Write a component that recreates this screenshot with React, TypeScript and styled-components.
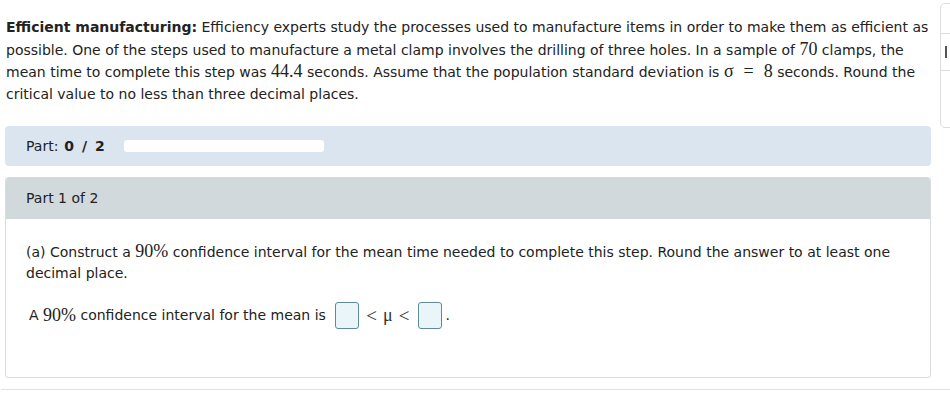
import React from "react";
import styled, { createGlobalStyle } from "styled-components";

const GlobalStyle = createGlobalStyle`
  html, body {
    margin: 0;
    padding: 0;
    background: #ffffff;
  }
  body {
    font-family: "DejaVu Sans", Verdana, sans-serif;
    color: #222222;
    overflow: hidden;
  }
`;

const Page = styled.div`
  position: relative;
  width: 950px;
  height: 406px;
  overflow: hidden;
`;

const Main = styled.div`
  width: 926px;
  padding: 17px 0 0 5px;
  display: flex;
  flex-direction: column;
`;

const Problem = styled.p`
  margin: 0 0 0 1px;
  font-size: 14px;
  line-height: 21.5px;
  color: #222;
`;

const Bold = styled.b`
  font-weight: bold;
`;

const M = styled.span`
  font-family: "Liberation Serif", "Times New Roman", serif;
  font-size: 18px;
`;

const Eq = styled.span`
  font-family: "Liberation Serif", "Times New Roman", serif;
  font-size: 18px;
  margin: 0 10px;
`;

const PartBar = styled.div`
  margin-top: 21px;
  height: 40px;
  background: #dae5ef;
  border-radius: 4px;
  display: flex;
  align-items: center;
  padding-left: 21px;
  font-size: 14px;
  color: #222;
`;

const PartCount = styled.b`
  margin-left: 6px;
  font-weight: bold;
  width: 60px;
  white-space: pre;
  word-spacing: 3px;
`;

const Progress = styled.div`
  width: 200px;
  height: 12px;
  background: #ffffff;
  border-radius: 3px;
`;

const Card = styled.div`
  margin-top: 11px;
  height: 200px;
  border: 1px solid #dcdcdc;
  border-top: none;
  border-radius: 4px;
  display: flex;
  flex-direction: column;
  overflow: hidden;
`;

const CardHeader = styled.div`
  height: 42px;
  background: #d1d9dc;
  display: flex;
  align-items: center;
  padding-left: 20px;
  font-size: 14px;
  color: #222;
`;

const CardBody = styled.div`
  padding: 22px 20px 0 20px;
  font-size: 14px;
  line-height: 21px;
`;

const Question = styled.p`
  margin: 0;
`;

const AnswerRow = styled.div`
  margin-top: 18px;
  padding-left: 3px;
  display: flex;
  align-items: center;
`;

const AnswerBox = styled.div`
  width: 22px;
  height: 25px;
  border: 1px solid #5d8c98;
  border-radius: 3px;
  background: #e9f5f8;
  margin: 0 3px 0 5px;
`;

const Rel = styled.span`
  font-family: "Liberation Serif", "Times New Roman", serif;
  font-size: 19px;
  color: #333;
  margin: 0 4px;
`;

const Mu = styled.span`
  font-family: "Liberation Serif", "Times New Roman", serif;
  font-size: 18px;
  color: #333;
  margin: 0 2px;
`;

const Divider = styled.div`
  margin-top: 11px;
  margin-left: 1px;
  width: 949px;
  border-top: 1px solid #e2e2e2;
`;

const SidePanel = styled.div`
  position: absolute;
  top: 3px;
  left: 940px;
  width: 40px;
  height: 123px;
  border: 1px solid #dddddd;
  border-radius: 5px;
  display: flex;
  flex-direction: column;
`;

const SideRow = styled.div<{ h: number }>`
  height: ${(p) => p.h}px;
  border-bottom: 1px solid #dddddd;
  display: flex;
  align-items: center;
  padding-left: 4px;
`;

const SideMark = styled.div`
  width: 2px;
  height: 12px;
  background: #555;
`;

export default function App() {
  return (
    <Page>
      <GlobalStyle />
      <Main>
        <Problem>
          <Bold>Efficient manufacturing:</Bold> Efficiency experts study the processes used to
          manufacture items in order to make them as efficient as possible. One of the steps used to
          manufacture a metal clamp involves the drilling of three holes. In a sample of <M>70</M>{" "}
          clamps, the mean time to complete this step was <M>44.4</M> seconds. Assume that the
          population standard deviation is <M>σ</M>
          <Eq>=</Eq>
          <M>8</M> seconds. Round the critical value to no less than three decimal places.
        </Problem>
        <PartBar>
          Part:<PartCount>{"0 / 2"}</PartCount>
          <Progress />
        </PartBar>
        <Card>
          <CardHeader>Part 1 of 2</CardHeader>
          <CardBody>
            <Question>
              (a) Construct a <M>90%</M> confidence interval for the mean time needed to complete
              this step. Round the answer to at least one decimal place.
            </Question>
            <AnswerRow>
              A&nbsp;<M>90%</M>&nbsp;confidence interval for the mean is&nbsp;
              <AnswerBox />
              <Rel>&lt;</Rel>
              <Mu>μ</Mu>
              <Rel>&lt;</Rel>
              <AnswerBox />
              <span>.</span>
            </AnswerRow>
          </CardBody>
        </Card>
      </Main>
      <Divider />
      <SidePanel>
        <SideRow h={29} />
        <SideRow h={36}>
          <SideMark />
        </SideRow>
      </SidePanel>
    </Page>
  );
}
